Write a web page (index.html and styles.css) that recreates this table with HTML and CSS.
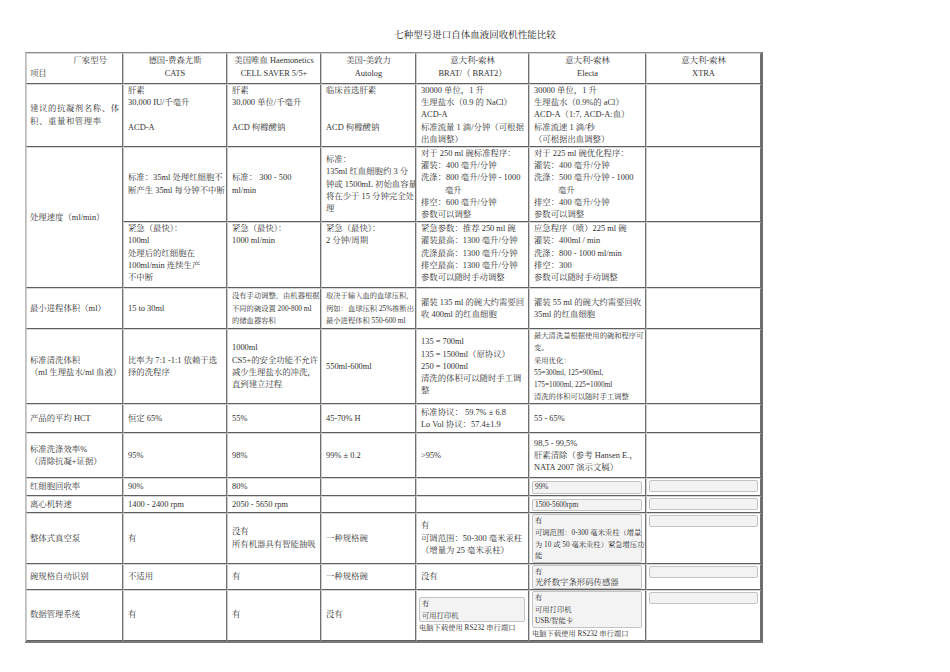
FILE: index.html
```html
<!DOCTYPE html>
<html lang="zh-CN">
<head>
<meta charset="utf-8">
<title>七种型号进口自体血液回收机性能比较</title>
<link rel="stylesheet" href="styles.css">
</head>
<body>
<div class="title">七种型号进口自体血液回收机性能比较</div>
<table class="cmp">
<colgroup>
<col class="c1"><col class="c2"><col class="c3"><col class="c4"><col class="c5"><col class="c6"><col class="c7">
</colgroup>
<tr class="r-head">
<td class="head0"><div class="mfr">厂家型号</div><div class="item">项目</div></td>
<td class="hd">德国-费森尤斯<br>CATS</td>
<td class="hd">美国唯血 Haemonetics<br>CELL SAVER 5/5+</td>
<td class="hd">美国-美敦力<br>Autolog</td>
<td class="hd">意大利-索林<br>BRAT/（ BRAT2）</td>
<td class="hd">意大利-索林<br>Electa</td>
<td class="hd">意大利-索林<br>XTRA</td>
</tr>
<tr class="r-anti">
<td class="lbl wide">建议的抗凝剂名称、体<br>积、重量和管理率</td>
<td class="top">肝素<br>30,000 IU/千毫升<br><br>ACD-A</td>
<td class="top">肝素<br>30,000 单位/千毫升<br><br>ACD 枸橼酸钠</td>
<td class="top">临床首选肝素<br><br><br>ACD 枸橼酸钠</td>
<td class="top">30000 单位，1 升<br>生理盐水（0.9 的 NaCl）<br>ACD-A<br>标准流量 1 滴/分钟（可根据<br>出血调整）</td>
<td class="top">30000 单位，1 升<br>生理盐水（0.9%的 aCl）<br>ACD-A（1:7, ACD-A:血）<br>标准流速 1 滴/秒<br>（可根据出血调整）</td>
<td class="xt"></td>
</tr>
<tr class="r-speed1">
<td class="lbl" rowspan="2">处理速度（ml/min）</td>
<td>标准：35ml 处理红细胞不<br>断产生 35ml 每分钟不中断</td>
<td>标准： 300 - 500<br>ml/min</td>
<td>标准：<br>135ml 红血细胞约 3 分<br>钟或 1500mL 初始血容量<br>将在少于 15 分钟完全处<br>理</td>
<td>对于 250 ml 碗标准程序：<br>灌装：400 毫升/分钟<br>洗涤：800 毫升/分钟 - 1000<br><span class="ind">毫升</span><br>排空：600 毫升/分钟<br>参数可以调整</td>
<td>对于 225 ml 碗优化程序：<br>灌装：400 毫升/分钟<br>洗涤：500 毫升/分钟 - 1000<br><span class="ind">毫升</span><br>排空：400 毫升/分钟<br>参数可以调整</td>
<td class="xt"></td>
</tr>
<tr class="r-speed2">
<td class="top">紧急（最快）：<br>100ml<br>处理后的红细胞在<br>100ml/min 连续生产<br>不中断</td>
<td class="top">紧急（最快）：<br>1000 ml/min</td>
<td class="top">紧急（最快）：<br>2 分钟/周期</td>
<td class="top">紧急参数：推荐 250 ml 碗<br>灌装最高：1300 毫升/分钟<br>洗涤最高：1300 毫升/分钟<br>排空最高：1300 毫升/分钟<br>参数可以随时手动调整</td>
<td class="top">应急程序（喷）225 ml 碗<br>灌装：400ml / min<br>洗涤：800 - 1000 ml/min<br>排空：300<br>参数可以随时手动调整</td>
<td class="xt"></td>
</tr>
<tr class="r-minvol">
<td class="lbl">最小进程体积（ml）</td>
<td>15 to 30ml</td>
<td class="sm">没有手动调整，由机器根据<br>不同的碗设置 200-800 ml<br>的储血器容积</td>
<td class="sm">取决于输入血的血球压积，<br>例如：血球压积 25%推断出<br>最小进程体积 550-600 ml</td>
<td>灌装 135 ml 的碗大约需要回<br>收 400ml 的红血细胞</td>
<td>灌装 55 ml 的碗大约需要回收<br>35ml 的红血细胞</td>
<td class="xt"></td>
</tr>
<tr class="r-washvol">
<td class="lbl">标准清洗体积<br>（ml 生理盐水/ml 血液）</td>
<td>比率为 7:1 -1:1 依赖于选<br>择的洗程序</td>
<td>1000ml<br>CS5+的安全功能不允许<br>减少生理盐水的冲洗，<br>直到建立过程</td>
<td>550ml-600ml</td>
<td>135 = 700ml<br>135 = 1500ml（原协议）<br>250 = 1000ml<br>清洗的体积可以随时手工调<br>整</td>
<td class="sm">最大清洗量根据使用的碗和程序可<br>变。<br>采用优化：<br>55=300ml, 125=900ml,<br>175=1000ml, 225=1000ml<br>清洗的体积可以随时手工调整</td>
<td class="xt"></td>
</tr>
<tr class="r-hct">
<td class="lbl">产品的平均 HCT</td>
<td>恒定 65%</td>
<td>55%</td>
<td>45-70% H</td>
<td>标准协议： 59.7% ± 6.8<br>Lo Vol 协议：57.4±1.9</td>
<td>55 - 65%</td>
<td class="xt"></td>
</tr>
<tr class="r-eff">
<td class="lbl">标准洗涤效率%<br>（清除抗凝+证据）</td>
<td>95%</td>
<td>98%</td>
<td>99% ± 0.2</td>
<td>&gt;95%</td>
<td>98,5 - 99,5%<br>肝素清除（参考 Hansen E.，<br>NATA 2007 演示文稿）</td>
<td class="xt"></td>
</tr>
<tr class="r-rbc">
<td class="lbl">红细胞回收率</td>
<td>90%</td>
<td>80%</td>
<td></td>
<td></td>
<td class="el"><div class="fld sm one">99%</div></td>
<td class="xt"><div class="fld xf"></div></td>
</tr>
<tr class="r-cent">
<td class="lbl">离心机转速</td>
<td>1400 - 2400 rpm</td>
<td>2050 - 5650 rpm</td>
<td></td>
<td></td>
<td class="el"><div class="fld sm one">1500-5600rpm</div></td>
<td class="xt"><div class="fld xf"></div></td>
</tr>
<tr class="r-vac">
<td class="lbl">整体式真空泵</td>
<td>有</td>
<td>没有<br>所有机器具有智能抽吸</td>
<td>一种规格碗</td>
<td>有<br>可调范围：50-300 毫米汞柱<br>（增量为 25 毫米汞柱）</td>
<td class="el"><div class="fld sm tight">有<br>可调范围：0-300 毫米汞柱（增量<br>为 10 或 50 毫米汞柱）紧急增压功<br>能</div></td>
<td class="xt"><div class="fld xf"></div></td>
</tr>
<tr class="r-bowl">
<td class="lbl">碗规格自动识别</td>
<td>不适用</td>
<td>有</td>
<td>一种规格碗</td>
<td>没有</td>
<td class="el"><div class="fld bowl"><span class="sm">有</span><br>光纤数字条形码传感器</div></td>
<td class="xt"><div class="fld xf"></div></td>
</tr>
<tr class="r-data">
<td class="lbl">数据管理系统</td>
<td>有</td>
<td>有</td>
<td>没有</td>
<td class="el"><div class="fld sm tight">有<br>可用打印机</div><div class="sm tight">电脑下载使用 RS232 串行端口</div></td>
<td class="el"><div class="fld sm tight">有<br>可用打印机<br>USB/智能卡</div><div class="sm tight">电脑下载使用 RS232 串行端口</div></td>
<td class="xt"><div class="fld xf"></div></td>
</tr>
</table>
</body>
</html>
```
FILE: styles.css
```css
html, body {
  margin: 0;
  padding: 0;
  background: #ffffff;
}

body {
  font-family: "Liberation Serif", "Noto Serif CJK SC", "Noto Sans CJK SC", serif;
  color: #333333;
  font-size: 8.4px;
  line-height: 12.2px;
}

.title {
  padding-top: 29px;
  height: 12px;
  line-height: 12px;
  margin-bottom: 11px;
  font-size: 9.5px;
  text-align: center;
  color: #222222;
}

.cmp {
  margin-left: 25px;
  width: 738px;
  table-layout: fixed;
  border-collapse: separate;
  border-spacing: 0;
  border-top: 1px solid #8a8a8a;
  border-left: 1px solid #bdbdbd;
  border-right: 2px solid #6e6e6e;
  border-bottom: 2px solid #7a7a7a;
}

.c1 { width: 97px; }
.c2 { width: 104px; }
.c3 { width: 94px; }
.c4 { width: 95px; }
.c5 { width: 113px; }
.c6 { width: 117px; }
.c7 { width: 115px; }

.cmp td {
  padding: 0 1px 0 4px;
  border-top: 1px solid #d6d6d6;
  border-left: 1px solid #cccccc;
  border-right: 1px solid #707070;
  border-bottom: 1px solid #5f5f5f;
  vertical-align: middle;
  white-space: nowrap;
  overflow: hidden;
}

.r-head { height: 31px; }
.r-anti { height: 63px; }
.r-speed1 { height: 75px; }
.r-speed2 { height: 66px; }
.r-minvol { height: 41px; }
.r-washvol { height: 75px; }
.r-hct { height: 29px; }
.r-eff { height: 45px; }
.r-rbc { height: 18px; }
.r-cent { height: 17px; }
.r-vac { height: 50px; }
.r-bowl { height: 25px; }
.r-data { height: 51px; }

.cmp td.hd {
  vertical-align: top;
  text-align: center;
  padding: 0 1px;
  line-height: 13.4px;
}

.cmp td.head0 {
  vertical-align: top;
  padding: 0 1px 0 3px;
  line-height: 13.4px;
}

.mfr {
  text-align: right;
  padding-right: 14px;
}

.cmp td.top {
  vertical-align: top;
  padding-top: 0;
}

.cmp td.lbl {
  padding-left: 3px;
}

.wide {
  letter-spacing: 0.6px;
}

.ind {
  padding-left: 24px;
}

.sm {
  font-size: 7.3px;
  line-height: 12.2px;
}

.tight {
  line-height: 11.6px;
}

.one {
  line-height: 10.5px;
}

.cmp td.el {
  padding: 0 3px 0 2px;
}

.cmp td.xt {
  vertical-align: top;
  padding: 1px 2px 0 2px;
}

.fld {
  background: #f3f3f3;
  border: 1px solid #c3c3c3;
  border-radius: 2px;
  padding: 0 2px;
}

.bowl {
  line-height: 11px;
}

.bowl .sm {
  line-height: 11px;
}

.xf {
  height: 10px;
  padding: 0;
}
```
